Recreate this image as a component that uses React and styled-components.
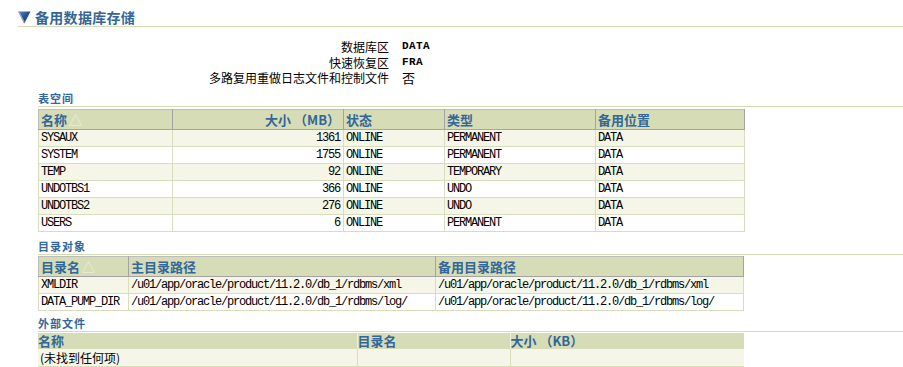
import React from "react";
import styled, { createGlobalStyle } from "styled-components";

const GlobalStyle = createGlobalStyle`
  html, body {
    margin: 0;
    padding: 0;
    background: #ffffff;
  }
  body {
    font-family: "Noto Sans CJK SC", "Liberation Sans", sans-serif;
    font-size: 12px;
    color: #000;
  }
`;

const tablespaces = [
  { name: "SYSAUX", size: 1361, status: "ONLINE", type: "PERMANENT", loc: "DATA" },
  { name: "SYSTEM", size: 1755, status: "ONLINE", type: "PERMANENT", loc: "DATA" },
  { name: "TEMP", size: 92, status: "ONLINE", type: "TEMPORARY", loc: "DATA" },
  { name: "UNDOTBS1", size: 366, status: "ONLINE", type: "UNDO", loc: "DATA" },
  { name: "UNDOTBS2", size: 276, status: "ONLINE", type: "UNDO", loc: "DATA" },
  { name: "USERS", size: 6, status: "ONLINE", type: "PERMANENT", loc: "DATA" },
];

const directories = [
  {
    name: "XMLDIR",
    primary: "/u01/app/oracle/product/11.2.0/db_1/rdbms/xml",
    standby: "/u01/app/oracle/product/11.2.0/db_1/rdbms/xml",
  },
  {
    name: "DATA_PUMP_DIR",
    primary: "/u01/app/oracle/product/11.2.0/db_1/rdbms/log/",
    standby: "/u01/app/oracle/product/11.2.0/db_1/rdbms/log/",
  },
];

const CollapseIcon = () => (
  <svg width="13" height="13" viewBox="0 0 13 13">
    <defs>
      <linearGradient id="tri" x1="0" y1="0" x2="1" y2="1">
        <stop offset="0" stopColor="#5b86c2" />
        <stop offset="0.5" stopColor="#24508f" />
        <stop offset="1" stopColor="#143a70" />
      </linearGradient>
    </defs>
    <polygon points="0,0.5 12.5,0.5 6.25,12.5" fill="url(#tri)" />
    <polyline points="1,1 6.25,11.2" stroke="#9fb8dd" strokeWidth="1" fill="none" />
  </svg>
);

const App = () => {
  return (
    <Page>
      <GlobalStyle />
      <PageHeader>
        <CollapseIcon />
        <PageTitle>备用数据库存储</PageTitle>
      </PageHeader>

      <InfoGrid>
        <InfoLabel>数据库区</InfoLabel>
        <InfoValue>DATA</InfoValue>
        <InfoLabel>快速恢复区</InfoLabel>
        <InfoValue>FRA</InfoValue>
        <InfoLabel>多路复用重做日志文件和控制文件</InfoLabel>
        <InfoValue $plain>否</InfoValue>
      </InfoGrid>

      <Section $top={6}>
        <SectionTitle>表空间</SectionTitle>
        <DataTable $gap={2}>
          <colgroup>
            <col style={{ width: 134 }} />
            <col style={{ width: 171 }} />
            <col style={{ width: 101 }} />
            <col style={{ width: 151 }} />
            <col style={{ width: 149 }} />
          </colgroup>
          <thead>
            <tr>
              <HeadCell>
                名称<SortMark>△</SortMark>
              </HeadCell>
              <HeadCell $right>大小 （MB）</HeadCell>
              <HeadCell>状态</HeadCell>
              <HeadCell>类型</HeadCell>
              <HeadCell>备用位置</HeadCell>
            </tr>
          </thead>
          <tbody>
            {tablespaces.map((t, i) => (
              <Row key={t.name} $odd={i % 2 === 0}>
                <Cell>{t.name}</Cell>
                <Cell $right>{t.size}</Cell>
                <Cell>{t.status}</Cell>
                <Cell>{t.type}</Cell>
                <Cell>{t.loc}</Cell>
              </Row>
            ))}
          </tbody>
        </DataTable>
      </Section>

      <Section $top={8}>
        <SectionTitle>目录对象</SectionTitle>
        <DataTable $gap={1}>
          <colgroup>
            <col style={{ width: 90 }} />
            <col style={{ width: 307 }} />
            <col style={{ width: 308 }} />
          </colgroup>
          <thead>
            <tr>
              <HeadCell>
                目录名<SortMark>△</SortMark>
              </HeadCell>
              <HeadCell>主目录路径</HeadCell>
              <HeadCell>备用目录路径</HeadCell>
            </tr>
          </thead>
          <tbody>
            {directories.map((d, i) => (
              <Row key={d.name} $odd={i % 2 === 0}>
                <Cell>{d.name}</Cell>
                <Cell>{d.primary}</Cell>
                <Cell>{d.standby}</Cell>
              </Row>
            ))}
          </tbody>
        </DataTable>
      </Section>

      <Section $top={6}>
        <SectionTitle>外部文件</SectionTitle>
        <FlatTable>
          <colgroup>
            <col style={{ width: 319 }} />
            <col style={{ width: 153 }} />
            <col style={{ width: 234 }} />
          </colgroup>
          <thead>
            <tr>
              <FlatHeadCell>名称</FlatHeadCell>
              <FlatHeadCell>目录名</FlatHeadCell>
              <FlatHeadCell>大小 （KB）</FlatHeadCell>
            </tr>
          </thead>
          <tbody>
            <Row $odd>
              <EmptyCell>(未找到任何项)</EmptyCell>
              <EmptyCell />
              <EmptyCell />
            </Row>
          </tbody>
        </FlatTable>
      </Section>
    </Page>
  );
};

export default App;

const Page = styled.div`
  padding: 8px 0 0 18px;
  width: 885px;
`;

const PageHeader = styled.div`
  display: flex;
  align-items: center;
  gap: 4px;
  height: 18px;
  border-bottom: 1px solid #d6dcb2;
`;

const PageTitle = styled.h1`
  margin: 0;
  font-size: 14px;
  line-height: 18px;
  font-weight: bold;
  color: #336699;
  letter-spacing: 0.3px;
`;

const InfoGrid = styled.div`
  display: grid;
  grid-template-columns: 371px auto;
  grid-auto-rows: 15.5px;
  margin-top: 12px;
  align-items: center;
`;

const InfoLabel = styled.div`
  text-align: right;
  font-size: 12px;
  line-height: 15px;
`;

const InfoValue = styled.div`
  padding-left: 13px;
  font-family: ${(p) =>
    p.$plain ? `"Noto Sans CJK SC", sans-serif` : `"Liberation Mono", monospace`};
  font-weight: ${(p) => (p.$plain ? "normal" : "bold")};
  font-size: ${(p) => (p.$plain ? "13px" : "11px")};
  letter-spacing: ${(p) => (p.$plain ? "0" : "0.4px")};
  line-height: 15px;
`;

const Section = styled.section`
  margin-top: ${(p) => p.$top}px;
  margin-left: 20px;
`;

const SectionTitle = styled.h2`
  margin: 0;
  height: 14px;
  line-height: 13px;
  font-size: 11px;
  font-weight: bold;
  color: #336699;
  letter-spacing: 1px;
  border-bottom: 1px solid #d6dcb2;
`;

const DataTable = styled.table`
  margin-top: ${(p) => p.$gap}px;
  border-collapse: collapse;
  table-layout: fixed;
  width: 706px;
`;

const HeadCell = styled.th`
  height: 19px;
  padding: 0 3px 0 2px;
  background: #d6ddb6;
  color: #336699;
  font-size: 13px;
  font-weight: bold;
  text-align: ${(p) => (p.$right ? "right" : "left")};
  white-space: nowrap;
  border: 1px solid #a3a3a3;
  border-top-color: #bdbdbd;
  border-left-color: #bdbdbd;
`;

const SortMark = styled.span`
  margin-left: 2px;
  font-weight: normal;
  color: #f2f3e4;
`;

const Row = styled.tr`
  background: ${(p) => (p.$odd ? "#f5f6e8" : "#ffffff")};
`;

const Cell = styled.td`
  height: 16px;
  padding: 0 3px 0 2px;
  font-family: "Liberation Mono", monospace;
  font-size: 12px;
  letter-spacing: -1.2px;
  line-height: 16px;
  white-space: nowrap;
  text-align: ${(p) => (p.$right ? "right" : "left")};
  border: 1px solid #d8ddbc;
`;

const FlatTable = styled.table`
  margin-top: 1px;
  border-collapse: collapse;
  table-layout: fixed;
  width: 706px;
`;

const FlatHeadCell = styled.th`
  height: 16px;
  padding: 0;
  background: #d6ddb6;
  color: #336699;
  font-size: 13px;
  font-weight: bold;
  line-height: 16px;
  text-align: left;
  white-space: nowrap;
  border-left: 1px solid #eef0dc;
  &:first-child {
    border-left: none;
  }
`;

const EmptyCell = styled.td`
  height: 17px;
  padding: 0 0 0 2px;
  font-size: 12px;
  line-height: 17px;
  border-left: 1px solid #d8ddbc;
  border-bottom: 1px solid #d8ddbc;
  &:first-child {
    border-left: none;
  }
`;
